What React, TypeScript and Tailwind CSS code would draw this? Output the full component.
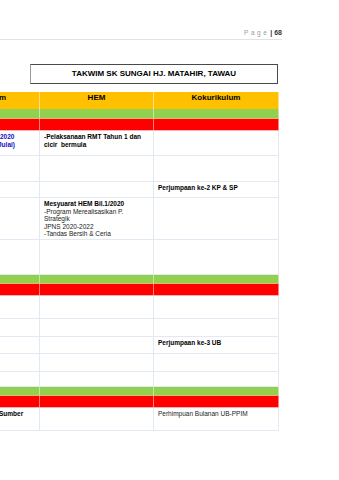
import React from "react";

type Row =
  | { kind: "orange"; h: number }
  | { kind: "green"; h: number }
  | { kind: "red"; h: number }
  | { kind: "cell"; h: number; c1?: React.ReactNode; c2?: React.ReactNode; c3?: React.ReactNode };

const rows: Row[] = [
  { kind: "orange", h: 17 },
  { kind: "green", h: 10 },
  { kind: "red", h: 12 },
  {
    kind: "cell",
    h: 25,
    c1: (
      <div className="font-bold text-[#1010c8]">
        <div>2020</div>
        <div className="-ml-[2px]">Julai)</div>
      </div>
    ),
    c2: (
      <div className="font-bold">
        <div>-Pelaksanaan RMT Tahun 1 dan</div>
        <div>cicir&nbsp; bermula</div>
      </div>
    ),
  },
  { kind: "cell", h: 26 },
  { kind: "cell", h: 16, c3: <div className="font-bold">Perjumpaan ke-2 KP &amp; SP</div> },
  {
    kind: "cell",
    h: 42,
    c2: (
      <div className="text-[#222]">
        <div className="font-bold text-black">Mesyuarat HEM Bil.1/2020</div>
        <div>-Program Merealisasikan P.</div>
        <div>Strategik</div>
        <div>JPNS 2020-2022</div>
        <div>-Tandas Bersih &amp; Ceria</div>
      </div>
    ),
  },
  { kind: "cell", h: 35 },
  { kind: "green", h: 9 },
  { kind: "red", h: 12 },
  { kind: "cell", h: 23 },
  { kind: "cell", h: 18 },
  { kind: "cell", h: 17, c3: <div className="font-bold">Perjumpaan ke-3 UB</div> },
  { kind: "cell", h: 18 },
  { kind: "cell", h: 15 },
  { kind: "green", h: 9 },
  { kind: "red", h: 12 },
  {
    kind: "cell",
    h: 23,
    c1: <div className="font-bold -ml-[1px]">Sumber</div>,
    c3: <div className="text-[#222]">Perhimpuan Bulanan UB-PPIM</div>,
  },
];

function TableRow({ row }: { row: Row }) {
  if (row.kind === "orange") {
    return (
      <div
        className="grid grid-cols-[40px_114px_125px] bg-[#ffc000] text-[8px] font-bold leading-[10px] text-black"
        style={{ height: row.h }}
      >
        <div className="border-r border-[#ffe08a] pt-[1px] overflow-hidden whitespace-nowrap">
          <div className="-ml-[1px]">m</div>
        </div>
        <div className="border-r border-[#ffe08a] pt-[1px] text-center">HEM</div>
        <div className="border-r border-[#ffe08a] pt-[1px] text-center">Kokurikulum</div>
      </div>
    );
  }
  if (row.kind === "green") {
    return (
      <div
        className="grid grid-cols-[40px_114px_125px] bg-[#92d050] border-b border-[#e9b56a]"
        style={{ height: row.h }}
      >
        <div className="border-r border-[#c6e6a6]" />
        <div className="border-r border-[#c6e6a6]" />
        <div className="border-r border-[#c6e6a6]" />
      </div>
    );
  }
  if (row.kind === "red") {
    return (
      <div
        className="grid grid-cols-[40px_114px_125px] bg-[#ff0000] border-b border-[#ffb0b0]"
        style={{ height: row.h }}
      >
        <div className="border-r border-[#ff8080]" />
        <div className="border-r border-[#ff8080]" />
        <div className="border-r border-[#ff8080]" />
      </div>
    );
  }
  return (
    <div
      className="grid grid-cols-[40px_114px_125px] border-b border-[#e3e9f2] text-[6.5px] leading-[7.6px] text-black"
      style={{ height: row.h }}
    >
      <div className="border-r border-[#e3e9f2] pt-[2px] overflow-hidden whitespace-nowrap">{row.c1}</div>
      <div className="border-r border-[#e3e9f2] pt-[2px] pl-[4px] whitespace-nowrap">{row.c2}</div>
      <div className="border-r border-[#e3e9f2] pt-[2px] pl-[4px] whitespace-nowrap">{row.c3}</div>
    </div>
  );
}

export default function App() {
  return (
    <div
      className="w-[339px] h-[480px] bg-white overflow-hidden"
      style={{ fontFamily: '"Liberation Sans", Arial, sans-serif' }}
    >
      <div className="w-[282px] h-[40px] border-b border-[#e2e2e2] flex items-end justify-end pb-[2px] leading-[8px]">
        <span className="text-[6.5px] tracking-[2.5px] text-[#9a9a9a]">Page</span>
        <span className="ml-[1px] text-[7px] font-bold text-[#333]">| 68</span>
      </div>
      <div className="ml-[30px] mt-[24px] w-[248px] h-[20px] border border-[#4a4a4a] border-l-[#9a9a9a] flex items-center justify-center text-[8px] font-bold text-black">
        TAKWIM SK SUNGAI HJ. MATAHIR, TAWAU
      </div>
      <div className="mt-[8px] w-[279px]">
        {rows.map((r, i) => (
          <TableRow key={i} row={r} />
        ))}
      </div>
    </div>
  );
}
